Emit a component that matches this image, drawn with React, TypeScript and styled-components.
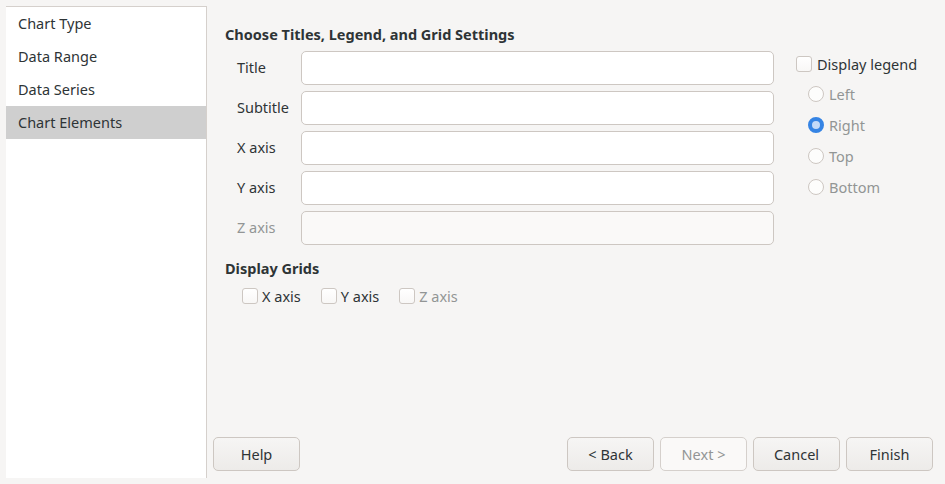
import React, { useState } from 'react';
import styled, { createGlobalStyle } from 'styled-components';

const GlobalStyle = createGlobalStyle`
  html, body {
    margin: 0;
    padding: 0;
    background: #f6f5f4;
  }
  body {
    font-family: 'Noto Sans', 'Open Sans', sans-serif;
    font-size: 14.5px;
    color: #2e3436;
  }
  * {
    box-sizing: border-box;
  }
`;

const steps = ['Chart Type', 'Data Range', 'Data Series', 'Chart Elements'];

const fields = [
  { label: 'Title', disabled: false },
  { label: 'Subtitle', disabled: false },
  { label: 'X axis', disabled: false },
  { label: 'Y axis', disabled: false },
  { label: 'Z axis', disabled: true },
];

const positions = ['Left', 'Right', 'Top', 'Bottom'];

const grids = [
  { label: 'X axis', disabled: false },
  { label: 'Y axis', disabled: false },
  { label: 'Z axis', disabled: true },
];

export default function App() {
  const [active, setActive] = useState(3);

  return (
    <>
      <GlobalStyle />
      <Window>
        <Sidebar>
          {steps.map((step, i) => (
            <StepItem key={step} $active={i === active} onClick={() => setActive(i)}>
              {step}
            </StepItem>
          ))}
        </Sidebar>
        <Main>
          <Content>
            <SectionTitle>Choose Titles, Legend, and Grid Settings</SectionTitle>
            <FormArea>
              <FieldGrid>
                {fields.map((f) => (
                  <React.Fragment key={f.label}>
                    <FieldLabel $disabled={f.disabled}>{f.label}</FieldLabel>
                    <TextInput disabled={f.disabled} />
                  </React.Fragment>
                ))}
              </FieldGrid>
              <LegendColumn>
                <CheckRow>
                  <CheckBox />
                  <span>Display legend</span>
                </CheckRow>
                <RadioList>
                  {positions.map((p) => (
                    <RadioRow key={p}>
                      <Radio $checked={p === 'Right'} />
                      <span>{p}</span>
                    </RadioRow>
                  ))}
                </RadioList>
              </LegendColumn>
            </FormArea>
            <GridsTitle>Display Grids</GridsTitle>
            <GridOptions>
              {grids.map((g) => (
                <CheckRow key={g.label} $disabled={g.disabled}>
                  <CheckBox />
                  <span>{g.label}</span>
                </CheckRow>
              ))}
            </GridOptions>
          </Content>
          <ButtonBar>
            <Button>Help</Button>
            <ButtonGroup>
              <Button>&lt; Back</Button>
              <Button disabled>Next &gt;</Button>
              <Button>Cancel</Button>
              <Button>Finish</Button>
            </ButtonGroup>
          </ButtonBar>
        </Main>
      </Window>
    </>
  );
}

const Window = styled.div`
  display: flex;
  width: 945px;
  height: 484px;
  padding: 6px 0 6px 6px;
`;

const Sidebar = styled.nav`
  width: 201px;
  flex-shrink: 0;
  background: #ffffff;
  border-top: 1px solid #d5d0cc;
  border-right: 1px solid #d5d0cc;
  display: flex;
  flex-direction: column;
`;

const StepItem = styled.div<{ $active: boolean }>`
  height: 33px;
  display: flex;
  align-items: center;
  padding: 0 0 2px 12px;
  background: ${(p) => (p.$active ? '#cfcfcf' : 'transparent')};
  cursor: default;
`;

const Main = styled.main`
  flex: 1;
  display: flex;
  flex-direction: column;
  padding: 0 12px 7px 6px;
`;

const Content = styled.div`
  padding: 18px 0 0 12px;
  display: flex;
  flex-direction: column;
`;

const SectionTitle = styled.h2`
  margin: 0;
  font-size: 14.5px;
  font-weight: 700;
  line-height: 20px;
`;

const FormArea = styled.div`
  display: flex;
  margin-top: 7px;
`;

const FieldGrid = styled.div`
  display: grid;
  grid-template-columns: 76px 473px;
  grid-auto-rows: 34px;
  row-gap: 6px;
`;

const FieldLabel = styled.label<{ $disabled: boolean }>`
  display: flex;
  align-items: center;
  padding: 0 0 2px 12px;
  color: ${(p) => (p.$disabled ? '#929595' : '#2e3436')};
`;

const TextInput = styled.input`
  height: 34px;
  border: 1px solid #cdc7c2;
  border-radius: 5px;
  background: #ffffff;
  font: inherit;
  padding: 0 8px;
  outline: none;

  &:disabled {
    background: #faf9f8;
  }
`;

const LegendColumn = styled.div`
  margin-left: 22px;
  padding-top: 5px;
  display: flex;
  flex-direction: column;
`;

const CheckRow = styled.label<{ $disabled?: boolean }>`
  display: flex;
  align-items: center;
  gap: 5px;
  height: 16px;
  color: ${(p) => (p.$disabled ? '#929595' : '#2e3436')};
`;

const CheckBox = styled.span`
  width: 16px;
  height: 16px;
  border: 1px solid #cdc7c2;
  border-radius: 3px;
  background: linear-gradient(#ffffff, #f8f7f6);
  flex-shrink: 0;
`;

const RadioList = styled.div`
  display: flex;
  flex-direction: column;
  gap: 15px;
  margin-top: 14px;
  padding-left: 12px;
`;

const RadioRow = styled.label`
  display: flex;
  align-items: center;
  gap: 5px;
  height: 16px;
  color: #929595;
`;

const Radio = styled.span<{ $checked: boolean }>`
  width: 16px;
  height: 16px;
  border-radius: 50%;
  flex-shrink: 0;
  border: ${(p) => (p.$checked ? '4px solid #3584e4' : '1px solid #cdc7c2')};
  background: ${(p) => (p.$checked ? '#c3daf8' : '#fdfdfc')};
`;

const GridsTitle = styled.h3`
  margin: 13px 0 0;
  font-size: 14.5px;
  font-weight: 700;
  line-height: 20px;
`;

const GridOptions = styled.div`
  display: flex;
  gap: 20px;
  margin-top: 10px;
  padding-left: 17px;

  ${CheckRow} {
    gap: 4px;
  }
`;

const ButtonBar = styled.div`
  margin-top: auto;
  display: flex;
  justify-content: space-between;
`;

const ButtonGroup = styled.div`
  display: flex;
  gap: 6px;
`;

const Button = styled.button`
  width: 87px;
  height: 34px;
  border: 1px solid #cdc7c2;
  border-radius: 5px;
  background: linear-gradient(#f6f5f4, #edebe9);
  font: inherit;
  color: #2e3436;
  padding: 0;

  &:disabled {
    background: #faf9f8;
    border-color: #d5d0cc;
    color: #929595;
  }
`;
